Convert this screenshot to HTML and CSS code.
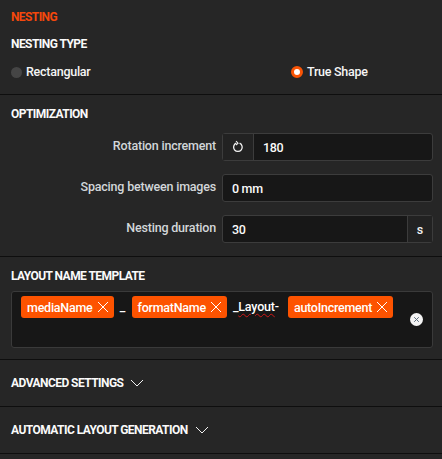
FILE: index.html
```html
<!DOCTYPE html>
<html lang="en">
<head>
    <meta charset="UTF-8">
    <title>Nesting</title>
    <link rel="stylesheet" href="styles.css">
</head>
<body>
    <section class="panel-section nesting-section">
        <h1 class="panel-title">NESTING</h1>
        <h2 class="section-title">NESTING TYPE</h2>
        <div class="radio-row">
            <label class="radio-item"><span class="radio"></span>Rectangular</label>
            <label class="radio-item"><span class="radio radio-on"></span>True Shape</label>
        </div>
    </section>

    <section class="panel-section optimization-section">
        <h2 class="section-title">OPTIMIZATION</h2>
        <div class="form-row">
            <label class="form-label">Rotation increment</label>
            <div class="input-box">
                <span class="addon addon-left">
                    <svg width="14" height="14" viewBox="0 0 14 14" fill="none" stroke="#f2f2f2" stroke-width="1.3">
                        <path d="M8.6 3.2a4.3 4.3 0 1 1-3.4 0"/>
                        <path d="M5 1.2 7 3.2 5 5" stroke-width="1.1"/>
                    </svg>
                </span>
                <span class="input-value">180</span>
            </div>
        </div>
        <div class="form-row">
            <label class="form-label">Spacing between images</label>
            <div class="input-box">
                <span class="input-value">0 mm</span>
            </div>
        </div>
        <div class="form-row">
            <label class="form-label">Nesting duration</label>
            <div class="input-box">
                <span class="input-value">30</span>
                <span class="addon addon-right">s</span>
            </div>
        </div>
    </section>

    <section class="panel-section template-section">
        <h2 class="section-title">LAYOUT NAME TEMPLATE</h2>
        <div class="template-box">
            <span class="tag">mediaName
                <svg class="tag-x" width="12" height="12" viewBox="0 0 12 12" stroke="#fff" stroke-width="1"><path d="M1 1l10 10M11 1 1 11"/></svg>
            </span>
            <span class="sep sep-one">_</span>
            <span class="tag">formatName
                <svg class="tag-x" width="12" height="12" viewBox="0 0 12 12" stroke="#fff" stroke-width="1"><path d="M1 1l10 10M11 1 1 11"/></svg>
            </span>
            <span class="sep sep-two">_<span class="misspelled">Layout</span>-</span>
            <span class="tag">autoIncrement
                <svg class="tag-x" width="12" height="12" viewBox="0 0 12 12" stroke="#fff" stroke-width="1"><path d="M1 1l10 10M11 1 1 11"/></svg>
            </span>
            <svg class="clear-icon" width="13" height="13" viewBox="0 0 13 13">
                <circle cx="6.5" cy="6.5" r="6.5" fill="#f4f4f4"/>
                <path d="M4.2 4.2l4.6 4.6M8.8 4.2 4.2 8.8" stroke="#5b6b7a" stroke-width="1"/>
            </svg>
        </div>
    </section>

    <section class="panel-section collapse-section">
        <h2 class="section-title">ADVANCED SETTINGS</h2>
        <svg class="chevron" width="14" height="8" viewBox="0 0 14 8" fill="none" stroke="#f2f2f2" stroke-width="1"><path d="M1 1l6 6 6-6"/></svg>
    </section>

    <section class="panel-section collapse-section">
        <h2 class="section-title">AUTOMATIC LAYOUT GENERATION</h2>
        <svg class="chevron" width="14" height="8" viewBox="0 0 14 8" fill="none" stroke="#f2f2f2" stroke-width="1"><path d="M1 1l6 6 6-6"/></svg>
    </section>
</body>
</html>
```

FILE: styles.css
```css
* {
    margin: 0;
    padding: 0;
    box-sizing: border-box;
    font-family: 'Roboto', 'Noto Sans', sans-serif;
}

body {
    background: #262626;
    color: #f5f5f5;
    width: 442px;
    height: 459px;
    overflow: hidden;
    font-size: 12.5px;
}

.panel-section {
    border-bottom: 1px solid #0e0e0e;
    padding: 0 9px 0 11px;
}

.panel-title {
    color: #f5480c;
    font-size: 12px;
    line-height: 16px;
    font-weight: 700;
    letter-spacing: -0.6px;
    margin-bottom: 11px;
}

.section-title {
    font-size: 12px;
    line-height: 16px;
    font-weight: 700;
    letter-spacing: -0.55px;
    color: #fafafa;
}

.nesting-section {
    height: 95px;
    padding-top: 9px;
}

.radio-row {
    display: grid;
    grid-template-columns: 280px 1fr;
    margin-top: 12px;
}

.radio-item {
    display: flex;
    align-items: center;
    gap: 4px;
    font-size: 12.5px;
    line-height: 16px;
    font-weight: 500;
    letter-spacing: -0.26px;
}

.radio {
    width: 11px;
    height: 11px;
    border-radius: 50%;
    background: #454545;
}

.radio-on {
    width: 12px;
    height: 12px;
    background: #fff;
    border: 3px solid #f85406;
}

.optimization-section {
    height: 162px;
    padding-top: 11px;
}

.optimization-section .section-title {
    margin-bottom: 11px;
}

.form-row {
    display: flex;
    align-items: center;
    justify-content: flex-end;
    gap: 6px;
    margin-bottom: 13px;
}

.form-label {
    font-size: 12.5px;
    font-weight: 500;
    letter-spacing: -0.2px;
    color: #d2d6d9;
    padding-bottom: 3px;
}

.input-box {
    width: 211px;
    height: 28px;
    display: flex;
    align-items: stretch;
    background: #171717;
    border: 1px solid #3c3c3c;
    border-radius: 3px;
}

.input-value {
    flex: 1;
    padding-left: 9px;
    line-height: 27px;
    font-size: 12.5px;
    font-weight: 500;
    letter-spacing: -0.3px;
    color: #fafafa;
}

.addon {
    display: flex;
    align-items: center;
    justify-content: center;
    background: #222;
    color: #f2f2f2;
}

.addon-left {
    width: 31px;
    border-right: 1px solid #3c3c3c;
}

.addon-right {
    width: 25px;
    border-left: 1px solid #3c3c3c;
    font-size: 12.5px;
    font-weight: 500;
}

.template-section {
    height: 103px;
    padding-top: 11px;
}

.template-box {
    position: relative;
    display: flex;
    align-items: flex-start;
    height: 57px;
    margin-top: 7px;
    padding: 4px 9px;
    background: #171717;
    border: 1px solid #3a3a3a;
    border-radius: 3px;
}

.tag {
    display: flex;
    align-items: center;
    gap: 4px;
    height: 22px;
    padding: 0 5px 0 6px;
    background: #fd5300;
    border-radius: 3px;
    font-size: 12.5px;
    font-weight: 500;
    letter-spacing: -0.25px;
    color: #fff;
}

.tag-x {
    flex: none;
}

.sep {
    font-size: 12.5px;
    font-weight: 500;
    line-height: 22px;
    color: #fff;
}

.sep-one {
    width: 18px;
    text-align: center;
}

.sep-two {
    width: 61px;
    padding-left: 6px;
    white-space: nowrap;
    letter-spacing: -0.2px;
}

.misspelled {
    text-decoration: underline wavy #d01818 1px;
    text-underline-offset: 2px;
}

.clear-icon {
    position: absolute;
    right: 9px;
    top: 21px;
}

.collapse-section {
    height: 47px;
    display: flex;
    align-items: center;
    gap: 7px;
    padding-bottom: 1px;
}

.chevron {
    flex: none;
}
```
